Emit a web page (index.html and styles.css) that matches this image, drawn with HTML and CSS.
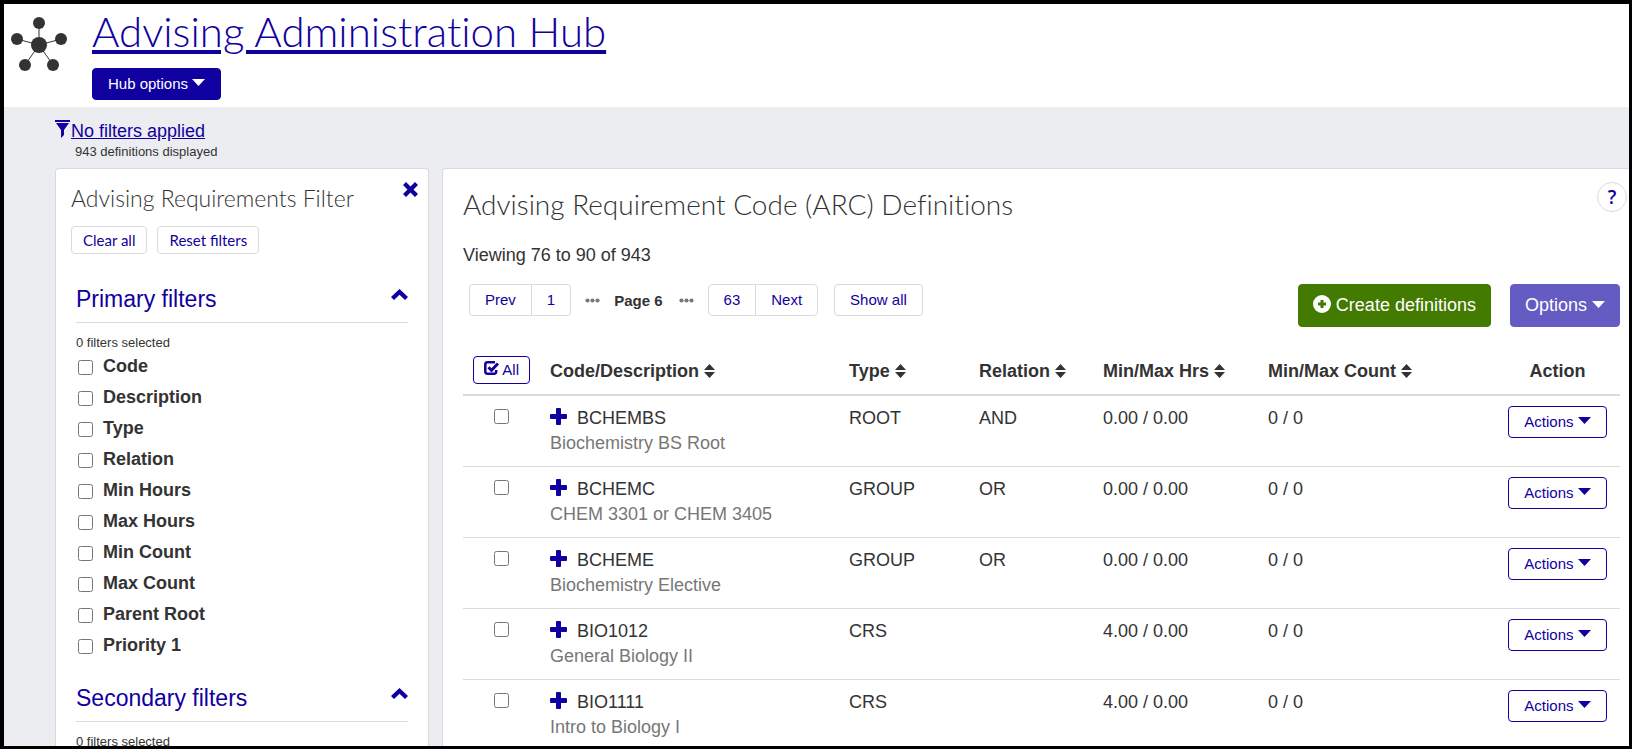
FILE: index.html
```html
<!DOCTYPE html>
<html lang="en">
<head>
    <meta charset="utf-8">
    <title>Advising Administration Hub</title>
    <link rel="stylesheet" href="styles.css">
</head>
<body>
    <!-- shared icons -->
    <svg class="sprite" aria-hidden="true">
        <symbol id="caret" viewBox="0 0 13 7"><path d="M0 0h13L6.500 7z"/></symbol>
        <symbol id="sort" viewBox="0 0 11 14"><path d="M5.500 0L11 6H0zM0 8h11l-5.500 6z"/></symbol>
        <symbol id="plus" viewBox="0 0 17 17"><path d="M6 1q0-1 1-1h3q1 0 1 1v5h5q1 0 1 1v3q0 1-1 1h-5v5q0 1-1 1H7q-1 0-1-1v-5H1q-1 0-1-1V7q0-1 1-1h5z"/></symbol>
        <symbol id="dots" viewBox="0 0 15 5"><circle cx="2.500" cy="2.500" r="2.100"/><circle cx="7.500" cy="2.500" r="2.100"/><circle cx="12.500" cy="2.500" r="2.100"/></symbol>
        <symbol id="chevron" viewBox="0 0 17 11"><path d="M8.500 0L17 8l-3 3-5.500-5.200L3 11 0 8z"/></symbol>
    </svg>

    <header class="page-header">
        <svg class="logo" viewBox="0 0 56 54" aria-hidden="true">
            <path d="M28 28V6M28 28L6 22M28 28l22-6M28 28L14 48M28 28l14 20" stroke="#333" stroke-width="1"/>
            <g fill="#333">
                <circle cx="28" cy="28" r="8"/>
                <circle cx="28" cy="6" r="6"/>
                <circle cx="6" cy="22" r="6"/>
                <circle cx="50" cy="22" r="6"/>
                <circle cx="14" cy="48" r="6"/>
                <circle cx="42" cy="48" r="6"/>
            </g>
        </svg>
        <div>
            <h1><a href="#">Advising Administration Hub</a></h1>
            <button class="btn btn-primary">Hub options <svg class="caret"><use href="#caret"/></svg></button>
        </div>
    </header>

    <main class="content">
        <div class="filter-status">
            <svg class="funnel" viewBox="0 0 15 18" aria-hidden="true"><path d="M0 0h15v2H0zM1 3h13L9 10v5l-3 3v-8z"/></svg>
            <div>
                <a href="#">No filters applied</a>
                <p>943 definitions displayed</p>
            </div>
        </div>

        <div class="columns">
            <aside class="card filter-card">
                <button class="close" aria-label="Close filter">
                    <svg viewBox="0 0 15 15"><path d="M3 0l4.500 4.500L12 0l3 3-4.500 4.500L15 12l-3 3-4.500-4.500L3 15l-3-3 4.500-4.500L0 3z"/></svg>
                </button>
                <h2>Advising Requirements Filter</h2>
                <div class="filter-buttons">
                    <button class="btn btn-small">Clear all</button>
                    <button class="btn btn-small">Reset filters</button>
                </div>

                <section class="filter-group">
                    <h3><a href="#">Primary filters</a><svg class="chevron"><use href="#chevron"/></svg></h3>
                    <p class="selected">0 filters selected</p>
                    <label><input type="checkbox">Code</label>
                    <label><input type="checkbox">Description</label>
                    <label><input type="checkbox">Type</label>
                    <label><input type="checkbox">Relation</label>
                    <label><input type="checkbox">Min Hours</label>
                    <label><input type="checkbox">Max Hours</label>
                    <label><input type="checkbox">Min Count</label>
                    <label><input type="checkbox">Max Count</label>
                    <label><input type="checkbox">Parent Root</label>
                    <label><input type="checkbox">Priority 1</label>
                </section>

                <section class="filter-group">
                    <h3><a href="#">Secondary filters</a><svg class="chevron"><use href="#chevron"/></svg></h3>
                    <p class="selected">0 filters selected</p>
                </section>
            </aside>

            <section class="card main-card">
                <button class="help" aria-label="Help">?</button>
                <h2>Advising Requirement Code (ARC) Definitions</h2>
                <p class="viewing">Viewing 76 to 90 of 943</p>

                <div class="toolbar">
                    <nav class="pager">
                        <div class="btn-group">
                            <button class="btn btn-default">Prev</button>
                            <button class="btn btn-default">1</button>
                        </div>
                        <svg class="dots"><use href="#dots"/></svg>
                        <strong>Page 6</strong>
                        <svg class="dots"><use href="#dots"/></svg>
                        <div class="btn-group">
                            <button class="btn btn-default">63</button>
                            <button class="btn btn-default">Next</button>
                        </div>
                        <button class="btn btn-default show-all">Show all</button>
                    </nav>
                    <div class="tools">
                        <button class="btn btn-large btn-create">
                            <svg class="circle-plus" viewBox="0 0 18 18"><circle cx="9" cy="9" r="9" fill="#fff"/><path d="M7.500 5h3v2.500H13v3h-2.500V13h-3v-2.500H5v-3h2.500z" fill="#437a00"/></svg>
                            Create definitions
                        </button>
                        <button class="btn btn-large btn-options">Options <svg class="caret"><use href="#caret"/></svg></button>
                    </div>
                </div>

                <table>
                    <colgroup>
                        <col class="col-check">
                        <col>
                        <col class="col-type">
                        <col class="col-relation">
                        <col class="col-hours">
                        <col class="col-count">
                        <col class="col-action">
                    </colgroup>
                    <thead>
                        <tr>
                            <th class="center">
                                <button class="btn btn-outline btn-all">
                                    <svg viewBox="0 0 15 14"><path d="M11 1.300H3.500Q1.300 1.300 1.300 3.500v7Q1.300 12.700 3.500 12.700h6.500q2.200 0 2.200-2.200V9" fill="none" stroke="#1000a0" stroke-width="2.500"/><path d="M4.500 6.300l3 3L14 2.500" fill="none" stroke="#1000a0" stroke-width="3"/></svg>
                                    All
                                </button>
                            </th>
                            <th>Code/Description <svg class="sort"><use href="#sort"/></svg></th>
                            <th>Type <svg class="sort"><use href="#sort"/></svg></th>
                            <th>Relation <svg class="sort"><use href="#sort"/></svg></th>
                            <th>Min/Max Hrs <svg class="sort"><use href="#sort"/></svg></th>
                            <th>Min/Max Count <svg class="sort"><use href="#sort"/></svg></th>
                            <th class="center">Action</th>
                        </tr>
                    </thead>
                    <tbody>
                        <tr>
                            <td class="center"><input type="checkbox" aria-label="Select BCHEMBS"></td>
                            <td><svg class="plus"><use href="#plus"/></svg>BCHEMBS<div class="desc">Biochemistry BS Root</div></td>
                            <td>ROOT</td>
                            <td>AND</td>
                            <td>0.00 / 0.00</td>
                            <td>0 / 0</td>
                            <td class="center"><button class="btn btn-outline">Actions <svg class="caret"><use href="#caret"/></svg></button></td>
                        </tr>
                        <tr>
                            <td class="center"><input type="checkbox" aria-label="Select BCHEMC"></td>
                            <td><svg class="plus"><use href="#plus"/></svg>BCHEMC<div class="desc">CHEM 3301 or CHEM 3405</div></td>
                            <td>GROUP</td>
                            <td>OR</td>
                            <td>0.00 / 0.00</td>
                            <td>0 / 0</td>
                            <td class="center"><button class="btn btn-outline">Actions <svg class="caret"><use href="#caret"/></svg></button></td>
                        </tr>
                        <tr>
                            <td class="center"><input type="checkbox" aria-label="Select BCHEME"></td>
                            <td><svg class="plus"><use href="#plus"/></svg>BCHEME<div class="desc">Biochemistry Elective</div></td>
                            <td>GROUP</td>
                            <td>OR</td>
                            <td>0.00 / 0.00</td>
                            <td>0 / 0</td>
                            <td class="center"><button class="btn btn-outline">Actions <svg class="caret"><use href="#caret"/></svg></button></td>
                        </tr>
                        <tr>
                            <td class="center"><input type="checkbox" aria-label="Select BIO1012"></td>
                            <td><svg class="plus"><use href="#plus"/></svg>BIO1012<div class="desc">General Biology II</div></td>
                            <td>CRS</td>
                            <td></td>
                            <td>4.00 / 0.00</td>
                            <td>0 / 0</td>
                            <td class="center"><button class="btn btn-outline">Actions <svg class="caret"><use href="#caret"/></svg></button></td>
                        </tr>
                        <tr>
                            <td class="center"><input type="checkbox" aria-label="Select BIO1111"></td>
                            <td><svg class="plus"><use href="#plus"/></svg>BIO1111<div class="desc">Intro to Biology I</div></td>
                            <td>CRS</td>
                            <td></td>
                            <td>4.00 / 0.00</td>
                            <td>0 / 0</td>
                            <td class="center"><button class="btn btn-outline">Actions <svg class="caret"><use href="#caret"/></svg></button></td>
                        </tr>
                    </tbody>
                </table>
            </section>
        </div>
    </main>
</body>
</html>
```

FILE: styles.css
```css
* { box-sizing: border-box; }
body {
    margin: 0;
    height: 100vh;
    display: flex;
    flex-direction: column;
    overflow: hidden;
    border: 3px solid #000;
    border-width: 4px 3px 3px 4px;
    background: #fff;
    color: #333;
    font-family: "Liberation Sans", Arial, sans-serif;
    font-size: 18px;
    line-height: 25px;
}
h1, h2, h3, p { margin: 0; font-weight: 400; }
h1, h2 {
    font-family: Lato, "Open Sans", sans-serif;
    font-weight: 300;
    font-variant-ligatures: none;
}
a { color: #1000a0; }
svg { fill: currentColor; }
.sprite { display: none; }

/* buttons */
.btn {
    padding: 0 15px;
    border: 1px solid #d9dadb;
    border-radius: 4px;
    background: #fff;
    color: #1000a0;
    font-family: "Liberation Sans", Arial, sans-serif;
    font-size: 15px;
    line-height: 30px;
    white-space: nowrap;
    cursor: pointer;
}
.btn-primary { background: #1000a0; border-color: #1000a0; color: #fff; }
.btn-outline { border-color: #1000a0; }
.btn-small {
    padding: 0 11px;
    font-family: Lato, "Open Sans", sans-serif;
    line-height: 26px;
}
.btn-large { padding: 0 14px; font-size: 18px; line-height: 41px; color: #fff; }
.btn-create { background: #437a00; border-color: #437a00; }
.btn-options { background: #655cc3; border-color: #655cc3; }
.caret { width: 13px; height: 7px; vertical-align: 3px; }
.btn-group { display: flex; }
.btn-group .btn:first-child { border-radius: 4px 0 0 4px; }
.btn-group .btn:last-child { margin-left: -1px; border-radius: 0 4px 4px 0; }

input[type="checkbox"] { width: 15px; height: 15px; margin: 2px 0 0; }

/* header */
.page-header {
    display: flex;
    gap: 25px;
    padding: 0 7px 7px;
}
.logo { width: 56px; height: 54px; margin-top: 13px; flex: none; }
.page-header h1 { font-size: 42px; line-height: 54px; margin-bottom: 10px; }
.page-header h1 a { text-decoration-thickness: 4px; text-underline-offset: 3px; }

/* content */
.content {
    flex: 1;
    display: flex;
    flex-direction: column;
    min-height: 0;
    padding-left: 51px;
    background: #ecedf1;
}
.filter-status { display: flex; gap: 1px; padding: 12px 0 8px; }
.funnel { width: 15px; height: 18px; margin-top: 1px; color: #1000a0; }
.filter-status p { padding-left: 4px; font-size: 13px; line-height: 16px; }
.columns { flex: 1; display: flex; gap: 13px; min-height: 0; }
.card {
    position: relative;
    border: 1px solid #d9dadb;
    border-bottom: 0;
    border-radius: 4px 4px 0 0;
    background: #fff;
}

/* filter panel */
.filter-card { width: 374px; flex: none; padding: 15px; }
.filter-card h2 { font-size: 23px; line-height: 28px; margin-bottom: 14px; }
.close {
    position: absolute;
    top: 13px;
    right: 10px;
    padding: 0;
    border: 0;
    background: none;
    color: #1000a0;
    line-height: 0;
}
.close svg { width: 15px; height: 15px; }
.filter-buttons { display: flex; gap: 10px; margin-bottom: 25px; }
.filter-group { padding: 0 5px; margin-bottom: 20px; }
.filter-group h3 {
    display: flex;
    justify-content: space-between;
    padding: 3px 0 6px;
    margin-bottom: 11px;
    border-bottom: 1px solid #d9dadb;
    font-size: 23px;
    line-height: 34px;
}
.filter-group h3 a { text-decoration: none; }
.chevron { width: 17px; height: 11px; margin-top: 7px; color: #1000a0; }
.selected { margin-bottom: 3px; font-size: 13px; line-height: 17px; }
.filter-group label {
    display: flex;
    align-items: center;
    gap: 10px;
    padding-left: 2px;
    margin-bottom: 6px;
    font-weight: 700;
}

/* definitions */
.main-card { flex: 1; padding: 17px 9px 0 20px; border-right: 0; border-top-right-radius: 0; }
.main-card h2 { font-size: 28px; line-height: 36px; margin-bottom: 21px; }
.help {
    position: absolute;
    top: 13px;
    right: 2px;
    width: 30px;
    height: 30px;
    padding: 0;
    border: 1px solid #d9dadb;
    border-radius: 50%;
    background: #fff;
    color: #1000a0;
    font: 600 19px "Open Sans", sans-serif;
}
.viewing { margin-bottom: 16px; }
.toolbar { display: flex; justify-content: space-between; align-items: flex-start; }
.pager { display: flex; align-items: center; gap: 14px; padding-left: 6px; font-size: 15px; }
.pager strong { padding-right: 2px; }
.dots { width: 15px; height: 5px; color: #777; }
.show-all { margin-left: 2px; }
.tools { display: flex; gap: 19px; }
.circle-plus { width: 18px; height: 18px; vertical-align: -2px; }

table { width: 100%; margin-top: 19px; border-collapse: collapse; table-layout: fixed; }
.col-check { width: 77px; }
.col-type { width: 130px; }
.col-relation { width: 124px; }
.col-hours { width: 165px; }
.col-count { width: 237px; }
.col-action { width: 125px; }
th, td { padding: 10px; text-align: left; vertical-align: top; }
th { border-bottom: 2px solid #d9dadb; vertical-align: bottom; white-space: nowrap; }
td { border-bottom: 1px solid #d9dadb; line-height: 25px; }
th.center, td.center { padding: 10px 0; text-align: center; }
.btn-all { padding: 0 10px; line-height: 26px; }
.btn-all svg { width: 15px; height: 14px; }
.sort { width: 11px; height: 14px; vertical-align: -1px; }
.plus { width: 17px; height: 17px; margin-right: 10px; vertical-align: -1px; color: #1000a0; }
.desc { color: #777; }
```
